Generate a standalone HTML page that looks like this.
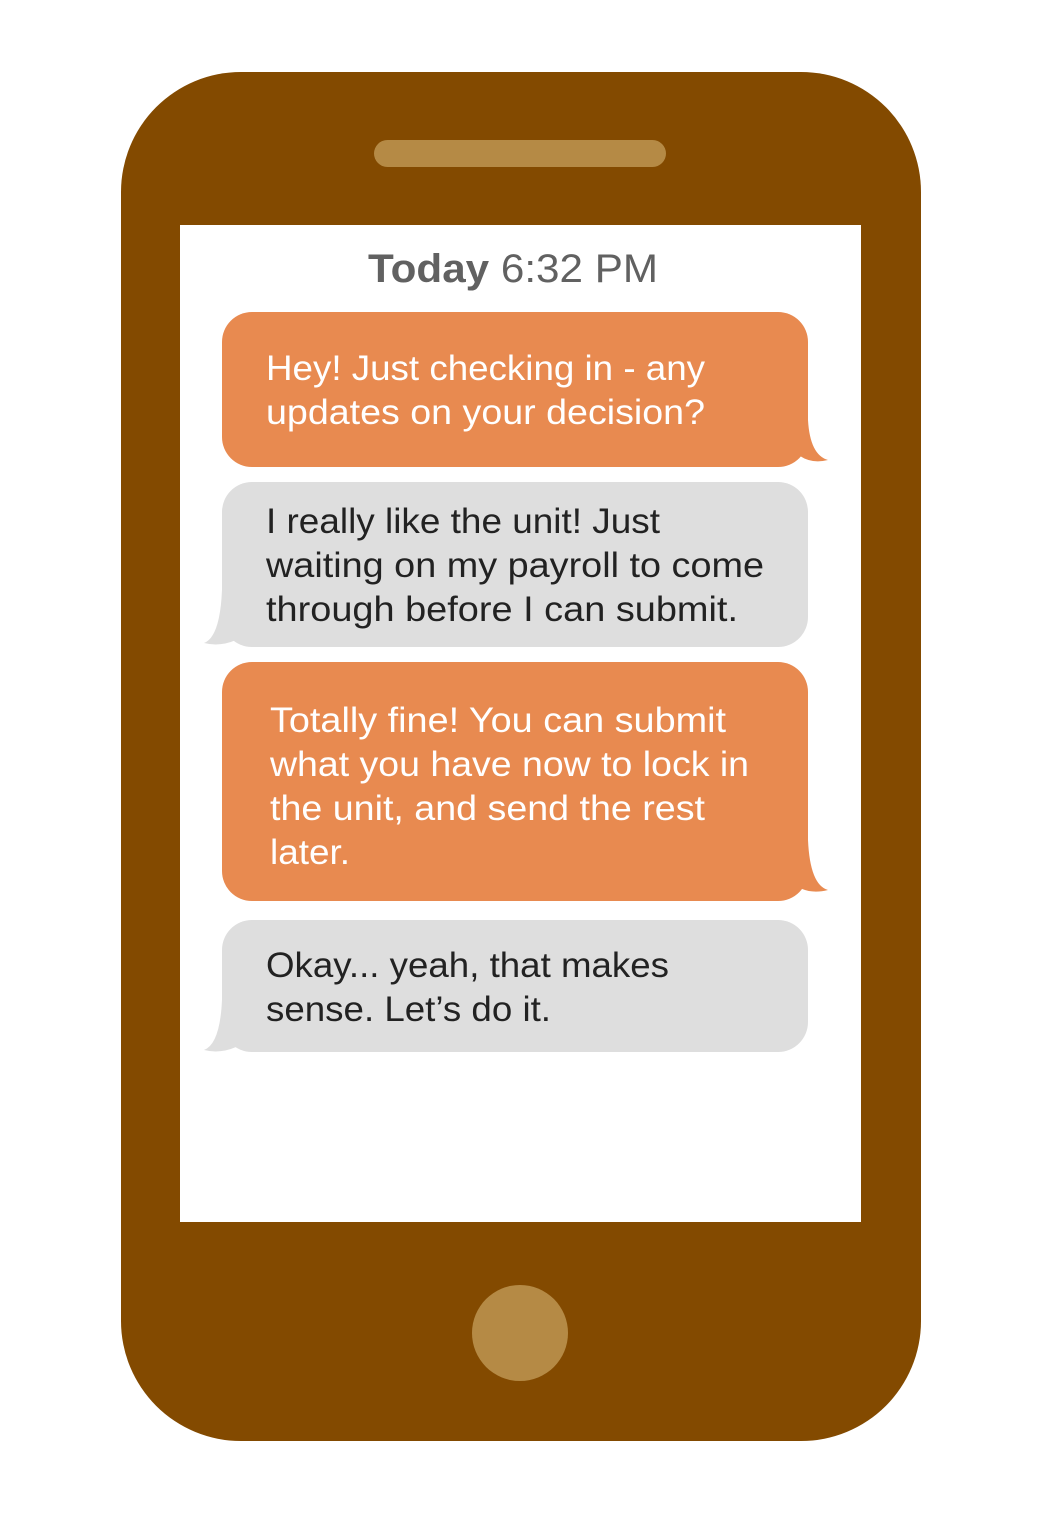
<!DOCTYPE html>
<html><head><meta charset="utf-8"><style>
html,body{margin:0;padding:0;background:#fff;}
svg{display:block}
text{font-family:"Liberation Sans",sans-serif;}
</style></head><body>
<svg width="1041" height="1534" viewBox="0 0 1041 1534" xmlns="http://www.w3.org/2000/svg">
<rect x="121" y="72" width="800" height="1369" rx="120" fill="#834a00"/>
<rect x="180" y="225" width="681" height="997" fill="#fff"/>
<rect x="374" y="140" width="292" height="27" rx="13.5" fill="#b58a45"/>
<circle cx="520" cy="1333" r="48" fill="#b58a45"/>
<text x="368" y="282" font-size="40" fill="#616161" textLength="290" lengthAdjust="spacingAndGlyphs"><tspan font-weight="bold">Today</tspan> 6:32 PM</text>

<g fill="#e88a50">
<rect x="222" y="312" width="586" height="155" rx="30"/>
<path d="M808,420 Q810,455 828,460 Q812,464 800,456 L790,440 Z"/>
<rect x="222" y="662" width="586" height="239" rx="30"/>
<path d="M808,840 Q810,885 828,890 Q812,894 800,888 L790,870 Z"/>
</g>
<g fill="#dedede">
<rect x="222" y="482" width="586" height="165" rx="30"/>
<path d="M222,590 Q220,637 204,643 Q220,647 236,640 L240,620 Z"/>
<rect x="222" y="920" width="586" height="132" rx="30"/>
<path d="M222,1000 Q220,1044 204,1050 Q220,1054 236,1047 L240,1030 Z"/>
</g>

<g font-size="35" fill="#fff" lengthAdjust="spacingAndGlyphs">
<text x="266" y="380" textLength="439" lengthAdjust="spacingAndGlyphs">Hey! Just checking in - any</text>
<text x="266" y="424" textLength="439" lengthAdjust="spacingAndGlyphs">updates on your decision?</text>
<text x="270" y="732" textLength="456" lengthAdjust="spacingAndGlyphs">Totally fine! You can submit</text>
<text x="270" y="776" textLength="479" lengthAdjust="spacingAndGlyphs">what you have now to lock in</text>
<text x="270" y="820" textLength="435" lengthAdjust="spacingAndGlyphs">the unit, and send the rest</text>
<text x="270" y="864" textLength="80" lengthAdjust="spacingAndGlyphs">later.</text>
</g>
<g font-size="35" fill="#222">
<text x="266" y="533" textLength="394" lengthAdjust="spacingAndGlyphs">I really like the unit! Just</text>
<text x="266" y="577" textLength="498" lengthAdjust="spacingAndGlyphs">waiting on my payroll to come</text>
<text x="266" y="621" textLength="472" lengthAdjust="spacingAndGlyphs">through before I can submit.</text>
<text x="266" y="977" textLength="403" lengthAdjust="spacingAndGlyphs">Okay... yeah, that makes</text>
<text x="266" y="1021" textLength="285" lengthAdjust="spacingAndGlyphs">sense. Let’s do it.</text>
</g>
</svg>
</body></html>
